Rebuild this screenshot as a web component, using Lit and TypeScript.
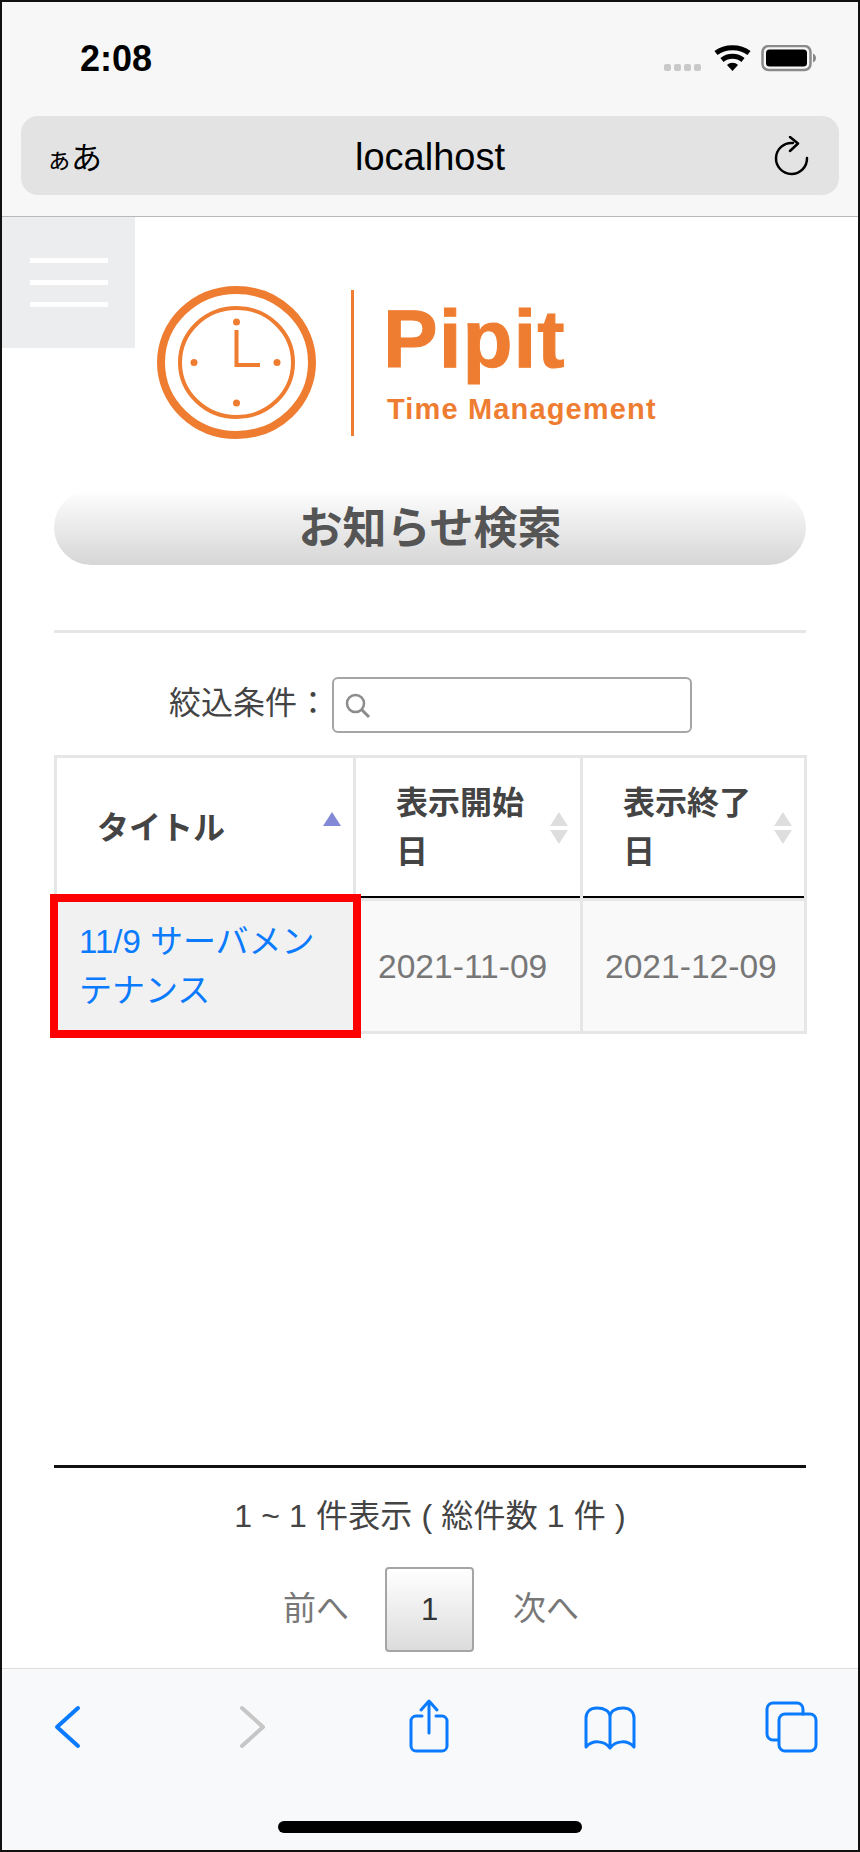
import { LitElement, html, css, svg } from "lit";
import { customElement } from "lit/decorators.js";

const sortUp = (fill: string) => svg`<path d="M9 0 L18 14 H0 Z" fill=${fill} />`;
const sortDown = (fill: string) => svg`<path d="M9 32 L18 18 H0 Z" fill=${fill} />`;

@customElement("app-root")
export class AppRoot extends LitElement {
  static styles = css`
    :host { display: block; width: 860px; height: 1852px; font-family: "Liberation Sans", "Noto Sans CJK JP", sans-serif; color: #444; }
    * { box-sizing: border-box; }
    .frame { width: 860px; height: 1852px; border: 2px solid #111; display: flex; flex-direction: column; background: #fff; overflow: hidden; }
    .top { height: 215px; background: #f7f7f7; border-bottom: 1px solid #b9b9b9; padding: 0 19px; flex: none; }
    .status { height: 114px; display: flex; justify-content: space-between; padding: 37px 23px 0 59px; }
    .time { font-size: 36px; font-weight: 700; color: #000; line-height: 40px; }
    .indicators { display: flex; align-items: flex-start; padding-top: 6px; }
    .addr { height: 79px; background: #e3e3e3; border-radius: 17px; display: flex; align-items: center; justify-content: space-between; padding: 0 30px 0 25px; position: relative; color: #000; }
    .aa { font-size: 31px; font-family: "Noto Sans CJK JP", sans-serif; letter-spacing: -1px; }
    .aa small { font-size: 26px; }
    .host { position: absolute; left: 0; right: 0; text-align: center; font-size: 38px; padding-top: 3px; }
    .main { flex: 1; position: relative; padding: 0 52px; min-height: 0; }
    .menu { position: absolute; left: 0; top: 0; width: 133px; height: 131px; background: #ecedef; display: flex; flex-direction: column; gap: 17px; padding: 41px 27px 0 28px; }
    .menu span { display: block; height: 5px; background: #fff; }
    .logo { display: flex; align-items: flex-start; padding: 69px 0 0 103px; height: 273px; color: #ef7d31; }
    .divider { width: 3px; height: 146px; background: #ef7d31; margin: 4px 29px 0 34px; flex: none; }
    .brand { display: flex; flex-direction: column; font-weight: 700; }
    .pipit { font-size: 82px; line-height: 92px; letter-spacing: 1px; margin-top: 7px; -webkit-text-stroke: 1px #ef7d31; }
    .tm { font-size: 29px; line-height: 34px; letter-spacing: 1.15px; margin-top: 7px; margin-left: 4px; }
    .pill { height: 75px; border-radius: 38px; background: linear-gradient(#ffffff, #f4f4f4 25%, #d6d6d6); display: flex; align-items: center; justify-content: center; font-size: 44px; font-weight: 700; color: #555; padding-bottom: 6px; }
    .rule { height: 3px; background: #e6e6e6; margin-top: 65px; }
    .filter { display: flex; align-items: center; height: 56px; margin-top: 44px; padding-left: 115px; font-size: 32px; color: #444; }
    .filter .label { width: 163px; white-space: nowrap; padding-bottom: 10px; }
    .input { width: 360px; height: 56px; border: 2px solid #a5a5a5; border-radius: 6px; background: #fff; padding: 14px 0 0 11px; display: flex; align-items: flex-start; }
    table { border-collapse: collapse; table-layout: fixed; width: 750px; margin-top: 22px; margin-left: 0; }
    th, td { border: 3px solid #e6e6e6; text-align: left; font-size: 32px; }
    th { height: 143px; padding: 0 48px 0 40px; line-height: 49px; color: #444; position: relative; font-weight: 700; border-bottom: 3px solid #e6e6e6; box-shadow: inset 0 -2px 0 #000; }
    th svg { position: absolute; top: 54px; right: 12px; }
    td { height: 133px; padding: 0 8px 0 22px; line-height: 49px; background: #f9f9f9; color: #777; font-size: 33.6px; }
    td.first { background: #f1f1f1; padding-right: 30px; font-size: 33px; }
    td a { color: #0a7bff; text-decoration: none; }
    .mark { position: absolute; left: 48px; top: 677px; width: 311px; height: 144px; border: 8.5px solid #ff0000; pointer-events: none; }
    .foot { position: absolute; left: 52px; right: 52px; top: 1248px; border-top: 3px solid #111; }
    .count { text-align: center; font-size: 32px; line-height: 40px; margin-top: 28px; color: #444; white-space: pre; letter-spacing: .15px; }
    .pager { display: flex; justify-content: center; align-items: center; gap: 36px; margin-top: 31px; font-size: 33px; color: #777; }
    .pager span { padding-bottom: 8px; }
    .pager span:first-child { margin-left: 2px; }
    .pager span:last-child { margin-left: 3px; }
    .page { width: 89px; height: 85px; border: 2px solid #a5a5a5; border-radius: 4px; background: linear-gradient(#fff, #dcdcdc); color: #333; display: flex; align-items: center; justify-content: center; font-size: 31px; }
    .tool { height: 182px; flex: none; background: #f8f9fa; border-top: 1px solid #ddd; display: flex; flex-direction: column; align-items: center; }
    .icons { width: 100%; display: flex; gap: 121px; padding: 28px 0 0 35px; height: 152px; }
    .icons svg { display: block; flex: none; }
    .home { width: 304px; height: 12px; border-radius: 6px; background: #000; }
  `;

  render() {
    const blue = "#0a7bff";
    return html`
      <div class="frame">
        <div class="top">
          <div class="status">
            <div class="time">2:08</div>
            <div class="indicators">
              <svg width="152" height="30" viewBox="0 0 152 30">
                <g fill="#c9c9c9">
                  <rect x="0" y="19" width="7" height="7" rx="2"/><rect x="10" y="19" width="7" height="7" rx="2"/><rect x="20" y="19" width="7" height="7" rx="2"/><rect x="30" y="19" width="7" height="7" rx="2"/>
                </g>
                <g fill="none" stroke="#000" stroke-width="5">
                  <path d="M52 8 C61 1 76 1 85 8"/>
                  <path d="M58 15 C64 10 73 10 79 15"/>
                </g>
                <path d="M63 20 C66 17 71 17 74 20 L68.500 26 Z" fill="#000"/>
                <rect x="98.500" y="1" width="48" height="24" rx="6" fill="none" stroke="#8a8a8a" stroke-width="2.500"/>
                <rect x="102" y="4.500" width="41" height="17" rx="3.500" fill="#000"/>
                <path d="M149 8.500 C151 9.500 152 11 152 13 C152 15 151 16.500 149 17.500 Z" fill="#8a8a8a"/>
              </svg>
            </div>
          </div>
          <div class="addr">
            <div class="aa"><small>ぁ</small>あ</div>
            <div class="host">localhost</div>
            <svg width="36" height="40" viewBox="0 0 36 40" fill="none" stroke="#000" stroke-width="2.500" stroke-linecap="round" stroke-linejoin="round">
              <path d="M20 7 A15.500 15.500 0 1 0 34 22"/><path d="M17 1 L25 7.500 L17 15"/>
            </svg>
          </div>
        </div>

        <div class="main">
          <div class="menu"><span></span><span></span><span></span></div>
          <div class="logo">
            <svg width="160" height="156" viewBox="0 0 160 156" fill="none" stroke="#ef7d31" style="flex:none">
              <ellipse cx="79.500" cy="76.500" rx="75.500" ry="72.500" stroke-width="8"/>
              <ellipse cx="79.500" cy="76.500" rx="56.500" ry="54.500" stroke-width="4"/>
              <path d="M79.500 44 V79 H103" stroke-width="4"/>
              <g fill="#ef7d31" stroke="none">
                <circle cx="79.500" cy="36" r="3.500"/><circle cx="79.500" cy="117" r="3.500"/>
                <circle cx="37" cy="76.500" r="3.500"/><circle cx="120" cy="76.500" r="3.500"/>
              </g>
            </svg>
            <div class="divider"></div>
            <div class="brand">
              <div class="pipit">Pipit</div>
              <div class="tm">Time Management</div>
            </div>
          </div>
          <div class="pill">お知らせ検索</div>
          <div class="rule"></div>
          <div class="filter">
            <div class="label">絞込条件：</div>
            <div class="input">
              <svg width="26" height="26" viewBox="0 0 26 26" fill="none" stroke="#8b8b8b" stroke-width="2.500">
                <circle cx="10.500" cy="10.500" r="8.500"/><path d="M16.500 16.500 L24 24" stroke-width="3"/>
              </svg>
            </div>
          </div>
          <table>
            <colgroup><col style="width:299px"/><col style="width:227px"/><col style="width:224px"/></colgroup>
            <thead>
              <tr>
                <th>タイトル<svg width="18" height="32" viewBox="0 0 18 32">${sortUp("#8288d6")}</svg></th>
                <th>表示開始日<svg width="18" height="32" viewBox="0 0 18 32">${sortUp("#dedede")}${sortDown("#dedede")}</svg></th>
                <th>表示終了日<svg width="18" height="32" viewBox="0 0 18 32">${sortUp("#dedede")}${sortDown("#dedede")}</svg></th>
              </tr>
            </thead>
            <tbody>
              <tr>
                <td class="first"><a href="#">11/9 サーバメンテナンス</a></td>
                <td>2021-11-09</td>
                <td>2021-12-09</td>
              </tr>
            </tbody>
          </table>
          <div class="mark"></div>
          <div class="foot">
            <div class="count">1 ~ 1 件表示 ( 総件数 1 件 )</div>
            <div class="pager"><span>前へ</span><div class="page">1</div><span>次へ</span></div>
          </div>
        </div>

        <div class="tool">
          <div class="icons">
            <svg width="60" height="60" viewBox="0 0 60 60" fill="none" stroke=${blue} stroke-width="4" stroke-linecap="round" stroke-linejoin="round">
              <path d="M41 11 L20 30 L41 49"/>
            </svg>
            <svg width="60" height="60" viewBox="0 0 60 60" fill="none" stroke="#c6c6c6" stroke-width="4" stroke-linecap="round" stroke-linejoin="round">
              <path d="M24 11 L45 30 L24 49"/>
            </svg>
            <svg width="60" height="60" viewBox="0 0 60 60" fill="none" stroke=${blue} stroke-width="3" stroke-linecap="round" stroke-linejoin="round">
              <path d="M23 19 H17 a5 5 0 0 0 -5 5 V49 a5 5 0 0 0 5 5 H43 a5 5 0 0 0 5 -5 V24 a5 5 0 0 0 -5 -5 H37"/>
              <path d="M30 36 V5 M22 13 L30 4 L38 13"/>
            </svg>
            <svg width="60" height="60" viewBox="0 0 60 60" fill="none" stroke=${blue} stroke-width="3" stroke-linecap="round" stroke-linejoin="round">
              <path d="M30 20 C30 14 24 11 17 11 C10 11 6 15 6 21 V50 C12 43 24 43 30 51 C36 43 48 43 54 50 V21 C54 15 50 11 43 11 C36 11 30 14 30 20 V50"/>
            </svg>
            <svg width="60" height="60" viewBox="0 0 60 60" fill="none" stroke=${blue} stroke-width="3" stroke-linecap="round" stroke-linejoin="round">
              <path d="M17 43 H12 a6 6 0 0 1 -6 -6 V12 a6 6 0 0 1 6 -6 H36 a6 6 0 0 1 6 6 V17"/>
              <rect x="18" y="17" width="37" height="37" rx="6"/>
            </svg>
          </div>
          <div class="home"></div>
        </div>
      </div>
    `;
  }
}
